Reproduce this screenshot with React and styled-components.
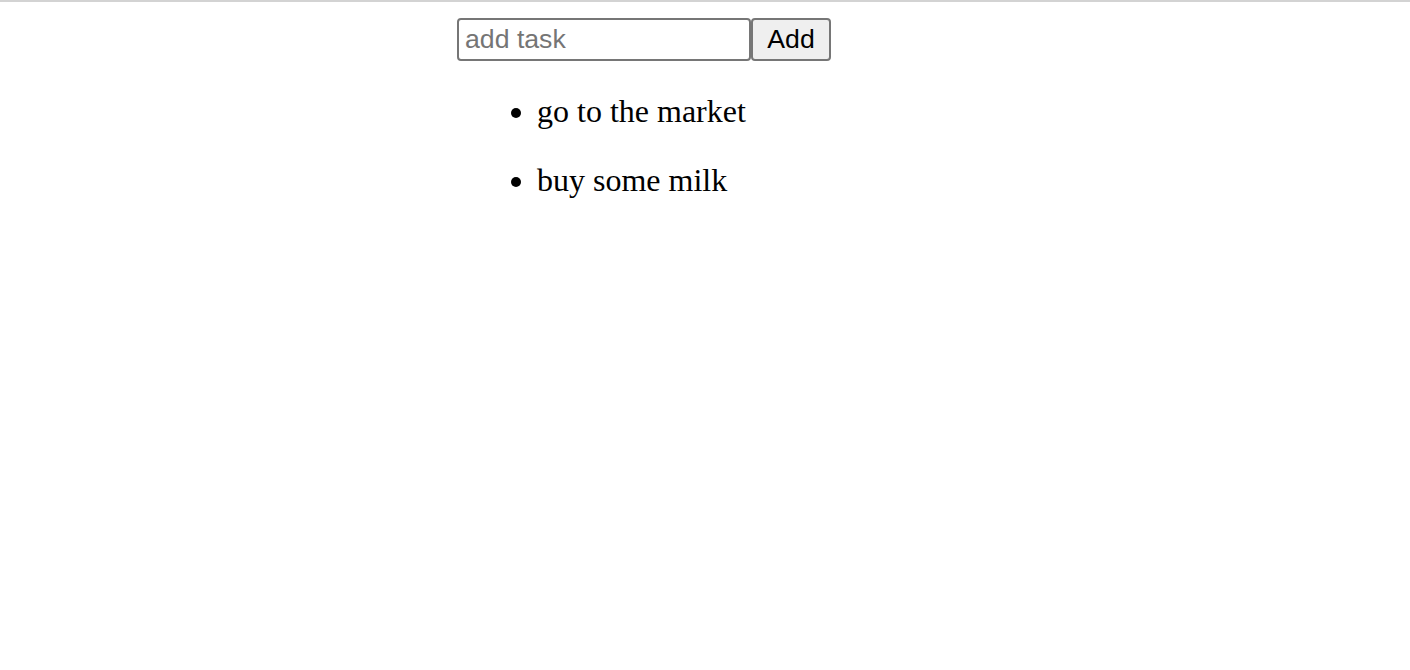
import React, { useState } from "react";
import styled, { createGlobalStyle } from "styled-components";

const Global = createGlobalStyle`
  html, body { margin: 0; padding: 0; background: #fff; }
  body { font-family: "Liberation Serif", "Times New Roman", serif; color: #000; }
`;

const TopRule = styled.div`
  height: 2px;
  background: #d3d3d3;
`;

const Main = styled.main`
  padding: 16px 0 0 457px;
`;

const Form = styled.form`
  display: flex;
  align-items: stretch;
`;

const Input = styled.input`
  box-sizing: border-box;
  width: 294px;
  height: 43px;
  border: 2px solid #767676;
  border-radius: 4px;
  padding: 0 6px;
  font-family: "Liberation Sans", Arial, sans-serif;
  font-size: 26.67px;
  color: #000;
  background: #fff;
  outline: none;
  &::placeholder { color: #757575; }
`;

const Button = styled.button`
  box-sizing: border-box;
  width: 80px;
  height: 43px;
  border: 2px solid #767676;
  border-radius: 4px;
  background: #efefef;
  font-family: "Liberation Sans", Arial, sans-serif;
  font-size: 26.67px;
  color: #000;
  padding: 0;
`;

const List = styled.ul`
  margin: 32px 0 0;
  padding-left: 80px;
  list-style: disc;
`;

const Item = styled.li`
  font-size: 32px;
  margin-bottom: 32px;
`;

export default function App() {
  const [tasks, setTasks] = useState(["go to the market", "buy some milk"]);
  const [value, setValue] = useState("");
  const add = (e) => {
    e.preventDefault();
    if (value.trim()) {
      setTasks([...tasks, value.trim()]);
      setValue("");
    }
  };
  return (
    <>
      <Global />
      <TopRule />
      <Main>
        <Form onSubmit={add}>
          <Input
            placeholder="add task"
            value={value}
            onChange={(e) => setValue(e.target.value)}
          />
          <Button type="submit">Add</Button>
        </Form>
        <List>
          {tasks.map((t) => (
            <Item key={t}>{t}</Item>
          ))}
        </List>
      </Main>
    </>
  );
}
